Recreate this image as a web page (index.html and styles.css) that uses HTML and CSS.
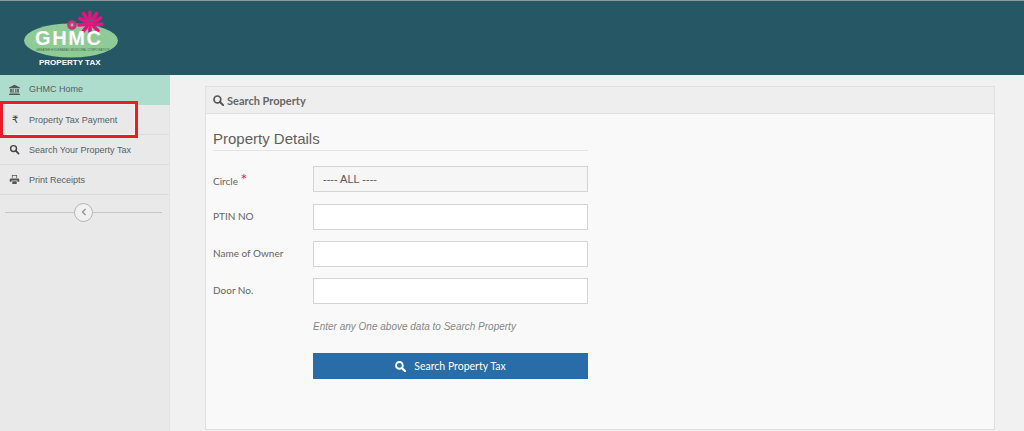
FILE: index.html
```html
<!DOCTYPE html>
<html lang="en">
<head>
    <meta charset="UTF-8">
    <meta name="viewport" content="width=device-width, initial-scale=1.0">
    <title>GHMC Property Tax</title>
    <link rel="stylesheet" href="styles.css">
</head>
<body>
    <!-- Header -->
    <header class="topbar">
        <div class="logo">
            <svg class="logo-art" width="100" height="66" viewBox="0 0 100 66">
                <ellipse cx="49" cy="39.5" rx="47" ry="17" fill="#8fcb96"/>
                <g stroke="#e6127f" stroke-width="3.6" stroke-linecap="round">
                    <path d="M68 17L68 11"/><path d="M64.5 17.5L61.5 12.5"/><path d="M71.5 17.5L74.5 12.5"/>
                    <path d="M62.5 20L58 17.5"/><path d="M73.5 20L78.5 17"/><path d="M62.5 23.5L57 24"/>
                    <path d="M74 23.5L80 23"/><path d="M64.5 26L61.5 30"/><path d="M72 26L76 29.5"/>
                    <path d="M68 27L68 31"/>
                </g>
                <circle cx="68" cy="21" r="5" fill="#e6127f"/>
                <path d="M65 19.5L71 19.5M65 22.5L71 22.5" stroke="#4d6f6a" stroke-width="0.8"/>
                <circle cx="50" cy="24" r="3.8" fill="#d9358a" stroke="#c2317c" stroke-width="2"/>
                <circle cx="50" cy="24" r="1.4" fill="#8fcb96"/>
            </svg>
            <div class="logo-name">GHMC</div>
            <div class="logo-tiny">GREATER HYDERABAD MUNICIPAL CORPORATION</div>
            <div class="logo-sub">PROPERTY TAX</div>
        </div>
    </header>

    <div class="layout">
        <!-- Side menu -->
        <aside class="sidebar">
            <ul class="menu">
                <li class="menu-item active">
                    <svg class="menu-icon" viewBox="0 0 14 14"><path fill="#555" d="M7 1L14 4.5V5.5H0V4.5ZM1.5 6.5H3.5V10.5H1.5ZM4.5 6.5H6V10.5H4.5ZM8 6.5H9.5V10.5H8ZM10.5 6.5H12.5V10.5H10.5ZM1 11H13V12.2H1ZM0 12.6H14V14H0Z"/></svg>
                    GHMC Home
                </li>
                <li class="menu-item">
                    <span class="menu-icon rupee">₹</span>
                    Property Tax Payment
                </li>
                <li class="menu-item">
                    <svg class="menu-icon" viewBox="-1 -1 15 15"><circle cx="5.2" cy="5.2" r="4" fill="none" stroke="#444" stroke-width="2"/><path d="M8.2 8.2L12 12" stroke="#444" stroke-width="2.4" stroke-linecap="round"/></svg>
                    Search Your Property Tax
                </li>
                <li class="menu-item">
                    <svg class="menu-icon" viewBox="-1 -1 15 14"><path fill="#555" d="M3 0H10V4H9V1H4V4H3ZM1.5 4.5H11.5Q13 4.5 13 6V9H10.5V7.5H2.5V9H0V6Q0 4.5 1.5 4.5ZM3.5 8.5H9.5V12H3.5Z"/></svg>
                    Print Receipts
                </li>
            </ul>
            <div class="collapse-row">
                <span class="collapse-btn">
                    <svg width="6" height="8" viewBox="0 0 6 8"><path d="M4.5 1L1.5 4L4.5 7" fill="none" stroke="#888" stroke-width="1.1"/></svg>
                </span>
            </div>
        </aside>

        <!-- Search form -->
        <main class="content">
            <section class="panel">
                <div class="panel-head">
                    <svg width="11" height="11" viewBox="0 0 13 13"><circle cx="5.2" cy="5.2" r="4" fill="none" stroke="#555" stroke-width="2"/><path d="M8.2 8.2L12 12" stroke="#555" stroke-width="2.4" stroke-linecap="round"/></svg>
                    Search Property
                </div>
                <div class="panel-body">
                    <h2 class="form-title">Property Details</h2>
                    <div class="field">
                        <label>Circle <span class="req">*</span></label>
                        <div class="input select">---- ALL ----</div>
                    </div>
                    <div class="field">
                        <label>PTIN NO</label>
                        <div class="input"></div>
                    </div>
                    <div class="field">
                        <label>Name of Owner</label>
                        <div class="input"></div>
                    </div>
                    <div class="field">
                        <label>Door No.</label>
                        <div class="input"></div>
                    </div>
                    <p class="hint">Enter any One above data to Search Property</p>
                    <button class="search-btn">
                        <svg width="11" height="11" viewBox="0 0 13 13"><circle cx="5.2" cy="5.2" r="4" fill="none" stroke="#fff" stroke-width="2.2"/><path d="M8.2 8.2L12 12" stroke="#fff" stroke-width="2.6" stroke-linecap="round"/></svg>
                        Search Property Tax
                    </button>
                </div>
            </section>
        </main>
    </div>

    <!-- Red highlight drawn over the menu -->
    <div class="highlight"></div>
</body>
</html>
```

FILE: styles.css
```css
html, body {
    height: 100%;
}

body {
    margin: 0;
    font-family: 'Liberation Sans', Arial, sans-serif;
    background-color: #f1f1f1;
    overflow: hidden;
    position: relative;
}

.topbar {
    height: 74px;
    background-color: #255764;
    border-top: 1px solid #8a9a9e;
    padding-left: 22px;
}

.logo {
    position: relative;
    width: 100px;
    height: 66px;
}

.logo-art {
    position: absolute;
    left: 0;
    top: 0;
}

.logo-name {
    position: absolute;
    left: 13px;
    top: 29px;
    font-size: 20px;
    line-height: 16px;
    font-weight: bold;
    letter-spacing: 1.6px;
    color: #fff;
}

.logo-tiny {
    position: absolute;
    left: 14px;
    top: 48px;
    font-size: 3px;
    line-height: 3px;
    color: #3f6b50;
    white-space: nowrap;
}

.logo-sub {
    position: absolute;
    left: 17px;
    top: 58px;
    font-size: 8px;
    line-height: 8px;
    font-weight: bold;
    color: #fff;
    white-space: nowrap;
}

.layout {
    display: flex;
    height: 356px;
}

.sidebar {
    width: 170px;
    flex-shrink: 0;
    background-color: #e9e9e9;
    border-right: 1px solid #e3e3e3;
    box-sizing: border-box;
}

.menu {
    list-style: none;
    margin: 0;
    padding: 0;
}

.menu-item {
    display: flex;
    align-items: center;
    height: 29px;
    padding-left: 9px;
    border-bottom: 1px solid #dcdcdc;
    font-size: 9px;
    color: #555e66;
}

.menu-item.active {
    height: 28px;
    padding-bottom: 1px;
    background-color: #aedccd;
    border-bottom-color: #aedccd;
    margin-right: -1px;
}

.menu-icon {
    width: 11px;
    height: 11px;
    margin-right: 9px;
    flex-shrink: 0;
}

.rupee {
    font-family: 'DejaVu Sans', sans-serif;
    font-size: 10px;
    line-height: 11px;
    color: #444;
    padding-left: 3px;
    width: 8px;
}

.collapse-row {
    margin: 7px 7px 0 5px;
    height: 20px;
    display: flex;
    align-items: center;
    justify-content: center;
    background: linear-gradient(#c6c6c6, #c6c6c6) center / 100% 1px no-repeat;
}

.collapse-btn {
    width: 17px;
    height: 17px;
    border: 1px solid #b5b5b5;
    border-radius: 50%;
    background-color: #f1f1f1;
    display: flex;
    align-items: center;
    justify-content: center;
}

.content {
    flex: 1;
    padding: 11px 29px 0 35px;
}

.panel {
    border: 1px solid #dfdfdf;
    background-color: #f9f9f9;
    height: 344px;
    box-sizing: border-box;
}

.panel-head {
    height: 27px;
    box-sizing: border-box;
    background-color: #eeeeee;
    border-bottom: 1px solid #dfdfdf;
    padding-left: 7px;
    display: flex;
    align-items: center;
    gap: 3px;
    font-family: Lato, sans-serif;
    font-size: 11px;
    font-weight: bold;
    color: #666;
}

.panel-body {
    padding: 15px 0 0 7px;
    width: 375px;
}

.form-title {
    margin: 0 0 15px;
    padding-bottom: 2px;
    border-bottom: 1px solid #e4e4e4;
    font-size: 15px;
    line-height: 19px;
    font-weight: normal;
    color: #5f5f5f;
}

.field {
    display: flex;
    align-items: center;
    margin-bottom: 11px;
}

.field label {
    width: 100px;
    flex-shrink: 0;
    padding-bottom: 3px;
    font-family: Lato, sans-serif;
    font-size: 10px;
    color: #666;
}

.form-title + .field {
    margin-bottom: 12px;
}

.form-title + .field label {
    padding-top: 3px;
    padding-bottom: 0;
}

.req {
    color: #e8212b;
    font-size: 16px;
    line-height: 10px;
}

.input {
    flex: 1;
    height: 26px;
    box-sizing: border-box;
    border: 1px solid #d4d4d4;
    background-color: #fff;
}

.input.select {
    background-color: #f6f6f6;
    padding-left: 9px;
    font-size: 11px;
    line-height: 24px;
    color: #5f5560;
}

.hint {
    margin: 16px 0 19px 100px;
    font-size: 10px;
    line-height: 14px;
    font-style: italic;
    color: #888;
}

.search-btn {
    display: flex;
    align-items: center;
    justify-content: center;
    gap: 8px;
    width: 275px;
    height: 26px;
    margin-left: 100px;
    border: none;
    background-color: #286ca8;
    font-family: Lato, sans-serif;
    font-size: 10.5px;
    color: #fff;
}

.highlight {
    position: absolute;
    left: 0;
    top: 101px;
    width: 138px;
    height: 37px;
    box-sizing: border-box;
    border: 3px solid #ed1c24;
    box-shadow: inset 0 0 0 1px #f6f6f6;
}
```
